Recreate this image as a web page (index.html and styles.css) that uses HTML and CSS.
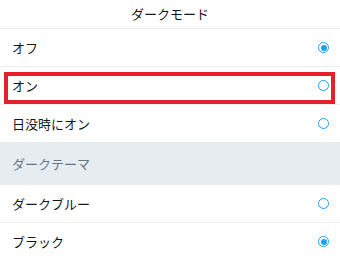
FILE: index.html
```html
<!DOCTYPE html>
<html lang="ja">
<head>
  <meta charset="UTF-8">
  <meta name="viewport" content="width=device-width, initial-scale=1.0">
  <title>ダークモード</title>
  <link rel="stylesheet" href="styles.css">
</head>
<body>
  <div class="title">ダークモード</div>
  <div class="list">
    <div class="row">
      <span>オフ</span>
      <span class="radio radio-checked"></span>
    </div>
    <div class="row row-marked">
      <span>オン</span>
      <span class="radio"></span>
      <div class="mark"></div>
    </div>
    <div class="row">
      <span>日没時にオン</span>
      <span class="radio"></span>
    </div>
  </div>
  <div class="section">ダークテーマ</div>
  <div class="list">
    <div class="row">
      <span>ダークブルー</span>
      <span class="radio"></span>
    </div>
    <div class="row">
      <span>ブラック</span>
      <span class="radio radio-checked"></span>
    </div>
  </div>
</body>
</html>
```

FILE: styles.css
```css
body {
  margin: 0;
  background: #fff;
  font-family: "Noto Sans CJK JP", "Noto Sans", sans-serif;
  font-size: 13px;
  color: #14171a;
}

.title {
  height: 28px;
  line-height: 27px;
  text-align: center;
  border-bottom: 1px solid #e6ecf0;
}

.row {
  height: 37px;
  display: flex;
  align-items: center;
  justify-content: space-between;
  padding: 0 11px 0 12px;
  border-bottom: 1px solid #eef1f4;
  position: relative;
}

.list .row:last-child {
  border-bottom: none;
}

.radio {
  width: 9px;
  height: 9px;
  border: 1.5px solid #1da1f2;
  border-radius: 50%;
  box-sizing: content-box;
  position: relative;
}

.radio-checked::after {
  content: "";
  position: absolute;
  left: 1.5px;
  top: 1.5px;
  width: 6px;
  height: 6px;
  border-radius: 50%;
  background: #1da1f2;
}

.mark {
  position: absolute;
  left: 4px;
  right: 5px;
  top: 5px;
  bottom: 0;
  border: 4px solid #e5202a;
}

.section {
  height: 43px;
  line-height: 43px;
  padding-left: 12px;
  background: #e6ecf0;
  color: #657786;
}
```
